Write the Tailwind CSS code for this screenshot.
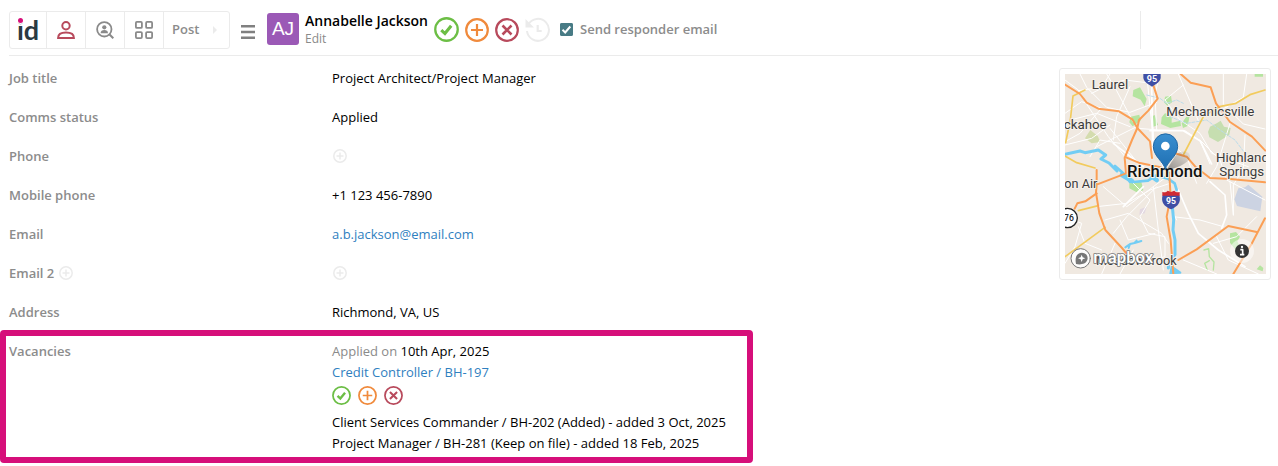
<!doctype html>
<html lang="en">
<head>
  <meta charset="utf-8">
  <meta name="viewport" content="width=device-width, initial-scale=1">
  <title>Annabelle Jackson</title>
  <script src="https://cdn.jsdelivr.net/npm/@tailwindcss/browser@4"></script>
</head>

<body class="bg-white font-['Open_Sans','Noto_Sans',sans-serif] text-[13px] leading-[21px] text-black">
  <!-- shared icons -->
  <svg class="hidden">
    <symbol id="accept" viewBox="0 0 24 24">
      <circle cx="12" cy="12" r="10.8" fill="none" stroke="currentColor" stroke-width="2.2"/>
      <path d="M7 12.6l3.5 3.3 6-7.4" fill="none" stroke="currentColor" stroke-width="3"/>
    </symbol>
    <symbol id="add" viewBox="0 0 24 24">
      <circle cx="12" cy="12" r="10.8" fill="none" stroke="currentColor" stroke-width="2.2"/>
      <path d="M12 6v12M6 12h12" fill="none" stroke="currentColor" stroke-width="2.2"/>
    </symbol>
    <symbol id="reject" viewBox="0 0 24 24">
      <circle cx="12" cy="12" r="10.8" fill="none" stroke="currentColor" stroke-width="2.2"/>
      <path d="M7.5 7.5l9 9M16.5 7.5l-9 9" fill="none" stroke="currentColor" stroke-width="2.6"/>
    </symbol>
    <symbol id="plus" viewBox="0 0 14 14">
      <circle cx="7" cy="7" r="6.2" fill="none" stroke="currentColor" stroke-width="1.5"/>
      <path d="M7 3.5v7M3.5 7h7" fill="none" stroke="currentColor" stroke-width="1.5"/>
    </symbol>
  </svg>

  <header class="ml-[9px] flex h-14 items-center border-b border-[#ebebeb] pt-1">
    <nav class="flex h-[38px] shrink-0 divide-x divide-[#ebebeb] rounded-[3px] border border-[#ebebeb]">
      <a href="#" class="relative flex w-[37px] items-center justify-center font-[Lato] text-[27px] font-bold leading-[34px] text-[#2b3a42]" aria-label="Home">id
        <span class="absolute left-[8px] top-[6px] size-[5px] rounded-full bg-[#d60f7a] ring-1 ring-white"></span>
      </a>
      <button class="flex w-[39px] items-center justify-center text-[#b84a5c]" aria-label="Candidates">
        <svg class="size-[18px]" viewBox="0 0 18 18" fill="none" stroke="currentColor" stroke-width="2">
          <circle cx="9" cy="4.7" r="3.7"/>
          <path d="M1.1 17c0-3.6 3-5.4 7.9-5.4s7.9 1.8 7.9 5.4z"/>
        </svg>
      </button>
      <button class="flex w-[39px] items-center justify-center text-[#8a8a8a]" aria-label="Search candidates">
        <svg class="size-[18px]" viewBox="0 0 18 18">
          <circle cx="8.3" cy="8.3" r="7.2" fill="none" stroke="currentColor" stroke-width="1.8"/>
          <path d="M13.3 13.3l4 4" stroke="currentColor" stroke-width="2"/>
          <circle cx="8.3" cy="6.3" r="2.1" fill="currentColor"/>
          <path d="M4.6 12.3c0-2.2 1.5-3.2 3.7-3.2s3.7 1 3.7 3.2z" fill="currentColor"/>
        </svg>
      </button>
      <button class="flex w-[39px] items-center justify-center text-[#8a8a8a]" aria-label="Apps">
        <svg class="size-[18px]" viewBox="0 0 18 18" fill="none" stroke="currentColor" stroke-width="1.8">
          <rect x="0.9" y="0.9" width="6" height="6" rx="1"/>
          <rect x="11.1" y="0.9" width="6" height="6" rx="1"/>
          <rect x="0.9" y="11.1" width="6" height="6" rx="1"/>
          <rect x="11.1" y="11.1" width="6" height="6" rx="1"/>
        </svg>
      </button>
      <button class="flex w-[65px] items-center gap-3.5 pl-2 text-[13px] font-semibold text-[#8c8c8c]">Post
        <svg class="h-2 w-1" viewBox="0 0 4 8"><path d="M0 0l4 4-4 4z" fill="#ebebeb"/></svg>
      </button>
    </nav>

    <button class="ml-[11px] mt-1 text-[#808080]" aria-label="Menu">
      <svg class="h-[14px] w-[14px]" viewBox="0 0 14 14" fill="currentColor">
        <path d="M0 0h14v2.5H0zM0 5.7h14v2.5H0zM0 11.4h14v2.5H0z"/>
      </svg>
    </button>
    <div class="mb-0.5 ml-3 flex size-8 shrink-0 items-center justify-center rounded-[3px] bg-[#9b59b6] font-['Liberation_Sans'] text-[19px] text-white">AJ</div>
    <div class="ml-1.5">
      <h1 class="text-sm font-semibold leading-[18px]">Annabelle Jackson</h1>
      <a href="#" class="block text-xs leading-[18px] text-[#8a8a8a]">Edit</a>
    </div>
    <div class="ml-[6px] flex shrink-0 gap-[6px]">
      <button class="text-[#6cbe45]" aria-label="Accept"><svg class="size-[25px]"><use href="#accept"/></svg></button>
      <button class="text-[#f08a3c]" aria-label="Add"><svg class="size-6"><use href="#add"/></svg></button>
      <button class="text-[#b84a5c]" aria-label="Reject"><svg class="size-6"><use href="#reject"/></svg></button>
      <button class="text-[#ebebeb]" aria-label="History">
        <svg class="size-[25px]" viewBox="0 0 25 25" fill="none" stroke="currentColor" stroke-width="2">
          <path d="M3.3 7.5a11 11 0 1 1-1.3 6.5"/>
          <path d="M0.5 2v8.5H9z" fill="currentColor" stroke="none"/>
          <path d="M12.7 8v6h4" stroke-width="2.2"/>
        </svg>
      </button>
    </div>
    <label class="ml-[10px] flex items-center gap-[7px] font-semibold text-[#8c8c8c]">
      <input type="checkbox" checked class="peer absolute size-[13px] appearance-none">
      <span class="flex size-[13px] items-center justify-center rounded-[2px] bg-white ring-1 ring-inset ring-[#487b85] peer-checked:bg-[#487b85]">
        <svg class="size-[11px]" viewBox="0 0 11 11"><path d="M1.5 5.8l2.7 2.7L9.3 2.5" fill="none" stroke="#fff" stroke-width="2"/></svg>
      </span>
      Send responder email
    </label>
    <div class="ml-auto mr-[137px] h-[38px] w-px bg-[#ebebeb]"></div>
  </header>

  <main class="flex items-start justify-between">
    <dl class="w-[753px] pt-[3px]">
      <div class="flex h-[39px] items-center pl-[9px]">
        <dt class="w-[323px] font-semibold text-[#8c8c8c]">Job title</dt>
        <dd>Project Architect/Project Manager</dd>
      </div>
      <div class="flex h-[39px] items-center pl-[9px]">
        <dt class="w-[323px] font-semibold text-[#8c8c8c]">Comms status</dt>
        <dd>Applied</dd>
      </div>
      <div class="flex h-[39px] items-center pl-[9px]">
        <dt class="w-[323px] font-semibold text-[#8c8c8c]">Phone</dt>
        <dd><button class="mb-0.5 ml-px block text-[#ebebeb]" aria-label="Add phone"><svg class="size-[14px]"><use href="#plus"/></svg></button></dd>
      </div>
      <div class="flex h-[39px] items-center pl-[9px]">
        <dt class="w-[323px] font-semibold text-[#8c8c8c]">Mobile phone</dt>
        <dd>+1 123 456-7890</dd>
      </div>
      <div class="flex h-[39px] items-center pl-[9px]">
        <dt class="w-[323px] font-semibold text-[#8c8c8c]">Email</dt>
        <dd><a href="mailto:a.b.jackson@email.com" class="text-[#2f80c0]">a.b.jackson@email.com</a></dd>
      </div>
      <div class="flex h-[39px] items-center pl-[9px]">
        <dt class="flex w-[323px] items-center gap-[5px] font-semibold text-[#8c8c8c]">Email 2
          <button class="mb-0.5 text-[#ebebeb]" aria-label="Add email type"><svg class="size-[14px]"><use href="#plus"/></svg></button>
        </dt>
        <dd><button class="mb-0.5 ml-px block text-[#ebebeb]" aria-label="Add email"><svg class="size-[14px]"><use href="#plus"/></svg></button></dd>
      </div>
      <div class="flex h-[37px] items-center pl-[9px] pt-0.5">
        <dt class="w-[323px] font-semibold text-[#8c8c8c]">Address</dt>
        <dd>Richmond, VA, US</dd>
      </div>
      <div class="flex rounded-[4px] border-[6px] border-[#d60f7a] pb-[3px] pl-[3px] pt-[5px]">
        <dt class="w-[323px] font-semibold text-[#8c8c8c]">Vacancies</dt>
        <dd>
          <p><span class="text-[#8a8a8a]">Applied on</span> 10th Apr, 2025</p>
          <a href="#" class="block text-[#2f80c0]">Credit Controller / BH-197</a>
          <div class="flex h-[29px] items-center gap-[7px] pb-1">
            <button class="text-[#6cbe45]" aria-label="Accept"><svg class="size-[19px]"><use href="#accept"/></svg></button>
            <button class="text-[#f08a3c]" aria-label="Add"><svg class="size-[19px]"><use href="#add"/></svg></button>
            <button class="text-[#b84a5c]" aria-label="Reject"><svg class="size-[19px]"><use href="#reject"/></svg></button>
          </div>
          <p>Client Services Commander / BH-202 (Added) - added 3 Oct, 2025</p>
          <p>Project Manager / BH-281 (Keep on file) - added 18 Feb, 2025</p>
        </dd>
      </div>
    </dl>

    <div class="mr-[7px] mt-3 rounded-[3px] border border-[#ebebeb] py-[5px] pl-[5px] pr-1">
      <svg class="h-[200px] w-[201px] bg-[#f0e9e1]" viewBox="45 42 603 600" fill="none" stroke-linecap="round" stroke-linejoin="round" font-family="Roboto, sans-serif">
        <defs>
          <linearGradient id="pin" x1="0" y1="0" x2="0" y2="1">
            <stop offset="0" stop-color="#3a8fd0"/>
            <stop offset="1" stop-color="#1f6fb2"/>
          </linearGradient>
          <linearGradient id="shade" x1="0" y1="1" x2="1" y2="0">
            <stop offset="0" stop-color="#000" stop-opacity="0.4"/>
            <stop offset="1" stop-color="#000" stop-opacity="0.03"/>
          </linearGradient>
        </defs>

        <!-- parks -->
        <g fill="#b5e4a0">
          <path d="M250 90l20-8 20 35-6 22-12-20-24-10zM345 110l18-3 3 20-14 10-10-10zM242 170l26-6 4 18-24 17-10-12zM304 170l10-5 10 30-16 6zM335 172l10-12 20 4 0 24 26-6 2 16-32 6-28-12zM395 190l14-20 10-2-6 30-14 6zM614 42h25v8h-25zM238 370l36-5 6 26-20 6-22-12zM540 520l18-4 12 14-8 14 16 34-16-2-22-28zM620 628l10-12 10 8-2 10z"/>
          <path d="M480 200l20-10 12-8 10 18 20 4-4 20-34 22-26-14-4-16z" fill="#c6deb0"/>
          <path d="M105 235l16-25 22 18 8 18-26 4z" fill="#d4dcae"/>
        </g>
        <path d="M565 385l20-3 10-8 42 36-6 44-70-16-8-20z" fill="#ccd3e2"/>
        <path d="M270 448l20-8-6 20-16 4z" fill="#e3d8e1"/>
        <path d="M462 570l14-4 2 24 14 16-2 24M478 602l-14 8 8 20" stroke="#b5e4a0" stroke-width="4"/>

        <!-- minor streets -->
        <g stroke="#fff" stroke-width="3">
          <path d="M45 60l40 30 30 50 60 90 50 60M85 92l70-10 25-40M125 100l60-30 40-10 80 10M170 42l30 50 50 95M90 42l20 40 60 60 70 15 80-30M45 160l50-35 60 20M60 180l80-20 100 40M150 150l-60 70-45 25M140 260l60-30 60-30M190 240l10-70 40-90M180 205l80 100M45 255l80-20 55-40M120 290l30-50 60 10"/>
          <path d="M290 42l12 120 10 90 40 100M305 120l8 160M330 42l-15 60 5 110M265 205l60 5 80 2 45 30 30 70M345 120l45 60 60 40 35 60 110 40M385 42l60 140M520 42v90l60 60 65 15M590 42l-10 70-70 40M400 75l-55 45M450 240l60 60 20 60 115 60M540 190l-40 130-30 50M585 225l-5 100-30 50v90M350 240l60 50 30 80"/>
          <path d="M160 380l70 60 80-60 40-30M140 440l90-10 70-40 60-20M190 520l40-50 90-90M165 480l70-20 100 60 20 30M230 350l70 70-30 50 25 50 50 10v60l-35 10M210 480l25 60 80-20M310 380l15 130 15 120M250 570l-40 72M195 550l-40 92M45 470l50 20-20 70-30 50M85 500l20 50 50 20M340 390l40 90M370 470l80 10 70 20M540 365l10 100M620 470l-60 60-70 20M500 530l35 70 90 42M400 600l100 42"/>
        </g>
        <g stroke="#fff" stroke-width="5">
          <path d="M305 80l3 190M300 212l100 0 50 30 35 70M385 390l30 70 30 60 60 50 80 50M480 365l45 40 5 60-15 40M190 250l90 70M280 380l-60 60"/>
        </g>
        <path d="M290 105l40 10 20 15 30-10 20 10M360 170l50 20 60-10 40 30 45 30 30 40" stroke="#bcdcea" stroke-width="3" stroke-dasharray="9 5"/>

        <!-- river -->
        <g stroke="#72cdf4">
          <path d="M45 283l45-10 15 5 40-8 22 15-14 12 24 12 24 24" stroke-width="9"/>
          <path d="M195 318l30 26 15 22M225 344l25 22 44-4 25-16 35 10 20 14 6 20" stroke-width="8"/>
          <path d="M216 345l30 18M300 345l20 15" stroke-width="14"/>
          <path d="M366 430l5 50-2 30 6 30v44l-18 22-2 18" stroke-width="9"/>
          <path d="M365 620l-4 20 30-2z" fill="#72cdf4" stroke-width="6"/>
          <path d="M226 562l14-10 14-3 20-6M240 552l-4 12M254 548l6-6" stroke-width="6"/>
        </g>

        <!-- highways -->
        <g stroke="#f2cb5d" stroke-width="5">
          <path d="M105 90l-36 18-8 72-14 68M45 288l35 20 55 16M645 90l-45 14-42 26-50 10-48 30-60 115M45 590l120-88M85 452l60-15"/>
        </g>
        <g stroke="#fb9f55" stroke-width="6">
          <path d="M45 74l45 28 20 26 35 18 62 8 40 24 15 26 38 40 6 50"/>
          <path d="M305 60l18 56-28 36-28 28-5 24-16 36-22 54 4 46-88 34-2 24 10 62 18 50 50 54 25 30"/>
          <path d="M228 292l38 16 66 14 35 22"/>
          <path d="M392 42l30 26 60 14 16 48 42 56 66 44 40 42"/>
          <path d="M375 280l35 10 26 30 44 34 60 3 105 10"/>
          <path d="M358 345l4 65-12 60 12 70 8 102"/>
          <path d="M385 600l55-32 95-70 85 18M645 475l-40 76-55 91M140 400l-34 24-24 6-8 16M140 330v40"/>
        </g>

        <!-- place names -->
        <g fill="#3b3b3b" stroke="#f6f1eb" stroke-width="6" paint-order="stroke" font-size="40">
          <text x="125" y="88">Laurel</text>
          <text x="349" y="168">Mechanicsville</text>
          <text x="41" y="206">ckahoe</text>
          <text x="498" y="306">Highland</text>
          <text x="508" y="349">Springs</text>
          <text x="43" y="384" font-size="38">on Air</text>
          <text x="138" y="614" font-size="38">Meadowbrook</text>
          <text x="231" y="350" font-size="50" font-weight="500" fill="#111">Richmond</text>
        </g>

        <!-- route shields -->
        <path d="M280 30h52v22c0 12-12 20-26 28-14-8-26-16-26-28z" fill="#3f4fa5"/>
        <text x="306" y="66" text-anchor="middle" font-size="27" font-weight="700" fill="#fff">95</text>
        <path d="M338 405c-6 22 4 34 25 43 21-9 31-21 25-43z" fill="#3f4fa5"/>
        <path d="M337 396c8 2 12 0 16-4l10 4 10-4c4 4 8 6 16 4v11h-52z" fill="#cf2a33"/>
        <text x="363" y="433" text-anchor="middle" font-size="26" font-weight="700" fill="#fff">95</text>
        <circle cx="53" cy="474" r="29" fill="#fff" stroke="#222" stroke-width="4"/>
        <text x="42" y="483" font-size="26" font-weight="500" fill="#222">76</text>

        <!-- marker -->
        <path d="M348 332l28-44c16-20 44-16 44 2 0 18-40 34-72 42z" fill="url(#shade)"/>
        <path d="M346 327c-5-22-36-38-36-68a36 37 0 0 1 73 0c0 30-32 46-37 68z" fill="url(#pin)" stroke="#2068a6" stroke-width="3"/>
        <circle cx="346" cy="258" r="13" fill="#fff"/>

        <!-- attribution -->
        <circle cx="92" cy="595" r="29" fill="#fff" fill-opacity="0.9" stroke="#777" stroke-width="3"/>
        <path d="M78 612c-4-20 2-34 18-34a17 17 0 0 1 0 34c-6 2-12 1-18 0z" fill="#777"/>
        <path d="M95 584l3 8 8 3-8 3-3 8-3-8-8-3 8-3z" fill="#fff"/>
        <text x="130" y="608" font-size="50" font-weight="500" fill="#fff" stroke="#777" stroke-width="5" paint-order="stroke">mapbox</text>
        <circle cx="576" cy="573" r="36" fill="#fff" fill-opacity="0.5"/>
        <circle cx="576" cy="573" r="21" fill="#333"/>
        <path d="M571 569h7v14M570 584h13" stroke="#fff" stroke-width="5" stroke-linecap="butt"/>
        <circle cx="576" cy="561" r="3.5" fill="#fff"/>
      </svg>
    </div>
  </main>
</body>
</html>
